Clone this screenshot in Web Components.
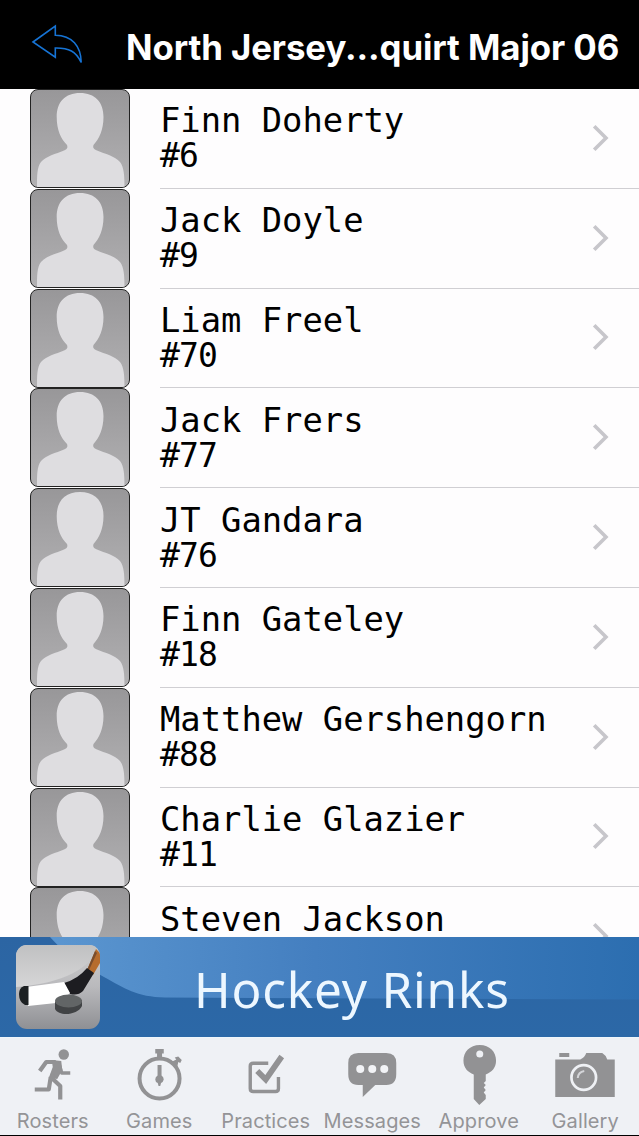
<!DOCTYPE html>
<html lang="en">
<head>
<meta charset="utf-8">
<title>Roster</title>
<style>
  body {
    margin: 0;
    background: #000;
  }
</style>
</head>
<body>
<team-app></team-app>

<script>
const define = (name, html) => {
  const template = document.createElement('template');
  template.innerHTML = html;

  customElements.define(name, class extends HTMLElement {
    constructor() {
      super();
      const shadowRoot = this.attachShadow({ mode: 'open' });
      shadowRoot.appendChild(template.content.cloneNode(true));
    }
  });
};

/* Top bar */
define('nav-bar', `
<style>
  :host {
    display: flex;
    align-items: center;
    height: 89px;
    box-sizing: border-box;
    padding: 5px 0 0 30px;
    background: #000;
    color: #fff;
    font: 700 34.800px/42px Inter, "Liberation Sans", sans-serif;
  }

  svg {
    display: block;
    width: 54px;
    height: 44px;
    margin-top: -7px;
  }

  .title {
    margin-left: 42px;
    white-space: nowrap;
    letter-spacing: -0.080px;
  }
</style>
<svg viewBox="30 21 54 44" fill="none" stroke="#1673d4" stroke-width="1.6">
  <path d="M33 41 L55.3 25 V34.3 C72 34.5 81 45 81.2 61.5 C76 50.5 69 46.8 55.3 47 V56.2 Z"/>
</svg>
<div class="title"><slot></slot></div>
`);

/* Placeholder portrait */
define('player-photo', `
<style>
  :host {
    display: block;
    width: 98px;
    height: 97px;
    border: 1px solid #222;
    border-radius: 8px;
    overflow: hidden;
    background: linear-gradient(#989799, #b2b1b3);
  }

  svg {
    display: block;
  }
</style>
<svg width="98" height="97" viewBox="0 0 98 97" fill="#dedde0">
  <path d="M49 3 C64 3 72.500 12 72.500 27 C72.500 40 68 49 62.500 55 C61.500 58 63 59 66 60.500 C74 64 84 66 89 72 C93 77 93.500 86 93.500 97 H6 C6 86 6 77 10 72 C15 66 25 64 33 60.500 C36 59 37 58 36 55 C30 49 25.700 40 25.700 27 C25.700 12 34 3 49 3 Z"/>
</svg>
`);

/* One player of the roster */
define('player-row', `
<style>
  :host {
    display: flex;
    height: 99.800px;
    padding-left: 30px;
    color: #000;
    font-family: "DejaVu Sans Mono", "Liberation Mono", monospace;
  }

  .body {
    flex: 1;
    display: flex;
    justify-content: space-between;
    align-items: center;
    margin-left: 30px;
    padding-right: 30px;
    border-bottom: 1px solid #d0cfd3;
    box-sizing: border-box;
  }

  .name {
    font-size: 33.800px;
    line-height: 36px;
    white-space: nowrap;
  }

  .number {
    height: 34px;
    font-size: 33px;
    line-height: 33px;
    letter-spacing: -0.9px;
  }

  svg {
    display: block;
    margin-top: -1px;
  }
</style>
<player-photo></player-photo>
<div class="body">
  <div>
    <div class="name"><slot></slot></div>
    <div class="number"><slot name="number"></slot></div>
  </div>
  <svg width="17" height="28" viewBox="0 0 17 28" fill="none" stroke="#c7c6cb" stroke-width="3.600">
    <path d="M2.200 2.200 L14 14 L2.200 25.800"/>
  </svg>
</div>
`);

define('player-list', `
<style>
  :host {
    display: block;
    height: 848px;
    overflow: hidden;
    background: #fefdfe;
  }
</style>
<slot></slot>
`);

/* Sponsor banner */
define('rink-banner', `
<style>
  :host {
    display: grid;
    height: 100px;
    overflow: hidden;
    color: #edf7ff;
    font: 49.500px/60px "Noto Sans", "Open Sans", sans-serif;
  }

  .wave, .content {
    grid-area: 1 / 1;
  }

  .content {
    display: flex;
    align-items: center;
    padding-left: 16px;
  }

  .label {
    margin: 3px 0 0 94px;
    white-space: nowrap;
    letter-spacing: 0.8px;
  }

  svg {
    display: block;
  }
</style>
<svg class="wave" width="639" height="100" viewBox="0 0 639 100">
  <defs>
    <linearGradient id="light">
      <stop offset="0" stop-color="#5b96d0"/>
      <stop offset="0.450" stop-color="#447fc0"/>
      <stop offset="1" stop-color="#2c6eb0"/>
    </linearGradient>
    <linearGradient id="dark" x1="0" y1="0" x2="0" y2="1">
      <stop offset="0" stop-color="#2c65a3"/>
      <stop offset="1" stop-color="#2c68a7"/>
    </linearGradient>
  </defs>
  <rect width="639" height="100" fill="url(#dark)"/>
  <path d="M50 0 C70 22 88 31 104 40 C124 51 137 60 165 60.500 L639 62.500 V0 Z" fill="url(#light)"/>
</svg>
<div class="content">
  <svg width="84" height="84" viewBox="0 0 84 84">
    <defs>
      <linearGradient id="tile" x1="0" y1="0" x2="0" y2="1">
        <stop offset="0" stop-color="#cfcfd0"/>
        <stop offset="0.500" stop-color="#b9b9bc"/>
        <stop offset="1" stop-color="#8f9094"/>
      </linearGradient>
      <linearGradient id="shine" x1="0" y1="0" x2="0" y2="1">
        <stop offset="0" stop-color="#c0c1c2"/>
        <stop offset="1" stop-color="#d6d6d7"/>
      </linearGradient>
      <clipPath id="round"><rect width="84" height="84" rx="11"/></clipPath>
    </defs>
    <g clip-path="url(#round)">
      <rect width="84" height="84" fill="url(#tile)"/>
      <path d="M0 0 H84 C74 24 48 38 0 42 Z" fill="url(#shine)"/>
      <path d="M71 25 L80 4 L84 8 V18 L77 30 Z" fill="#b66c2d"/>
      <path d="M79 6 L81 8 L73 25 L71.500 24 Z" fill="#7a4d2c"/>
      <path d="M48 38 Q62 34 71 23 L78 28 L67 46 Q62 51 54 49 Z" fill="#1d1d21"/>
      <path d="M10 42 L48 37 L54 48 L48 54 L40 58 L12 61 Z" fill="#fff"/>
      <path d="M8 41 H12.500 V60 H9 Q3 57 3 49 Q3 43 8 41 Z" fill="#1c2022"/>
      <path d="M39 57 V64 C43 72 62 70 66 61 V55 Z" fill="#414345"/>
      <ellipse cx="52.500" cy="56" rx="13.500" ry="6.500" fill="#626566"/>
    </g>
  </svg>
  <div class="label"><slot></slot></div>
</div>
`);

/* Bottom tabs */
define('tab-item', `
<style>
  :host {
    flex: 0 0 106.500px;
    display: flex;
    flex-direction: column;
    align-items: center;
    color: #949497;
    font: 20px/24px Inter, "Liberation Sans", sans-serif;
  }

  .icon {
    height: 71px;
  }

  .label {
    margin-right: 1px;
    white-space: nowrap;
    letter-spacing: 0.1px;
  }
</style>
<div class="icon"><slot name="icon"></slot></div>
<div class="label"><slot></slot></div>
`);

define('tab-bar', `
<style>
  :host {
    display: flex;
    height: 98px;
    background: #eff1f5;
    overflow: hidden;
  }

  svg {
    display: block;
  }
</style>
<tab-item>
  <svg slot="icon" width="64" height="71" viewBox="21.250 2 64 71" fill="none" stroke="#929294" stroke-width="4.200" stroke-linejoin="round">
    <circle cx="64" cy="18.500" r="5.200" fill="#929294" stroke="none"/>
    <path d="M40 35 L46.500 26 H56"/>
    <path d="M52 24 L61.500 25 L62.500 34 L57.500 43 L49 42 L53 31 Z" fill="#929294" stroke="none"/>
    <path d="M59 27 L62 37 H70.500" stroke-width="3.500"/>
    <path d="M53 38 L52 42 L60.500 50 V63.500"/>
    <path d="M51 41 L49 53.500 H35"/>
  </svg>
  Rosters
</tab-item>
<tab-item>
  <svg slot="icon" width="64" height="71" viewBox="127.750 2 64 71" fill="#929294">
    <circle cx="159.300" cy="42.500" r="20" fill="none" stroke="#929294" stroke-width="4"/>
    <path d="M155 13 H163.500 V17.500 H161.800 V23 H156.800 V17.500 H155 Z"/>
    <path d="M171 26 L176 23.500 L174.500 21.500 L178 20.500 L181.500 24 L180 27 L178 26 L177 31 Z"/>
    <path d="M157.300 29 H161.300 V39.500 Q163.500 41 163.500 43.500 Q163 46 160.800 47 L160 50 H158.300 L157.500 47 Q155 46 155 43.500 Q155 41 157.300 39.500 Z"/>
  </svg>
  Games
</tab-item>
<tab-item>
  <svg slot="icon" width="64" height="71" viewBox="234.250 2 64 71" fill="none" stroke="#929294">
    <path d="M268.500 27.200 H253.500 Q250.500 27.200 250.500 30 V52.500 Q250.500 55.500 253.500 55.500 H275.700 Q278.700 55.500 278.700 52.500 V41" stroke-width="3.400"/>
    <path d="M257.500 35 L266 43.500 L282 20.500" stroke-width="5.700"/>
  </svg>
  Practices
</tab-item>
<tab-item>
  <svg slot="icon" width="64" height="71" viewBox="340.750 2 64 71">
    <path d="M358 17 H386 Q396 17 396 27 V38 Q396 49 386 49 H375 L362.500 61 V49 H358 Q348 49 348 38 V27 Q348 17 358 17 Z" fill="#929294"/>
    <g fill="#f2f3f6">
      <circle cx="360" cy="33" r="4"/>
      <circle cx="372" cy="33" r="4"/>
      <circle cx="384" cy="33" r="4"/>
    </g>
  </svg>
  Messages
</tab-item>
<tab-item>
  <svg slot="icon" width="64" height="71" viewBox="447.250 2 64 71">
    <path d="M480 9 C490 9 496.300 16 496.300 24.500 C496.300 32 492 36 486 38.500 V45 L484 47 L486 49 L484 51.500 L486 54 L484 56.500 L486 59 V63 L479.500 69 L474 63 V38.500 C468 36 463.700 32 463.700 24.500 C463.700 16 470 9 480 9 Z" fill="#929294"/>
    <circle cx="480" cy="18" r="3.500" fill="#eff1f5"/>
  </svg>
  Approve
</tab-item>
<tab-item>
  <svg slot="icon" width="64" height="71" viewBox="553.750 2 64 71">
    <path d="M555 23.500 H580 Q584.500 21.500 586 17 H602 Q605.500 19 607 23.500 H614.500 V61 H555 Z M559 17 H569 V21 H559 Z" fill="#929294"/>
    <circle cx="583.500" cy="41.500" r="12.300" fill="none" stroke="#eff1f5" stroke-width="2.700"/>
    <path d="M577.500 42 Q578 36 584 35" fill="none" stroke="#d4d5d9" stroke-width="2"/>
  </svg>
  Gallery
</tab-item>
`);

define('team-app', `
<style>
  :host {
    display: block;
    width: 639px;
    height: 1136px;
    overflow: hidden;
  }

  tab-bar {
    border-top: 1px solid #eef5fb;
    box-sizing: border-box;
  }
</style>
<nav-bar>North Jersey...quirt Major 06</nav-bar>
<player-list>
  <player-row>Finn Doherty<span slot="number">#6</span></player-row>
  <player-row>Jack Doyle<span slot="number">#9</span></player-row>
  <player-row>Liam Freel<span slot="number">#70</span></player-row>
  <player-row>Jack Frers<span slot="number">#77</span></player-row>
  <player-row>JT Gandara<span slot="number">#76</span></player-row>
  <player-row>Finn Gateley<span slot="number">#18</span></player-row>
  <player-row>Matthew Gershengorn<span slot="number">#88</span></player-row>
  <player-row>Charlie Glazier<span slot="number">#11</span></player-row>
  <player-row>Steven Jackson</player-row>
</player-list>
<rink-banner>Hockey Rinks</rink-banner>
<tab-bar></tab-bar>
`);
</script>
</body>
</html>
